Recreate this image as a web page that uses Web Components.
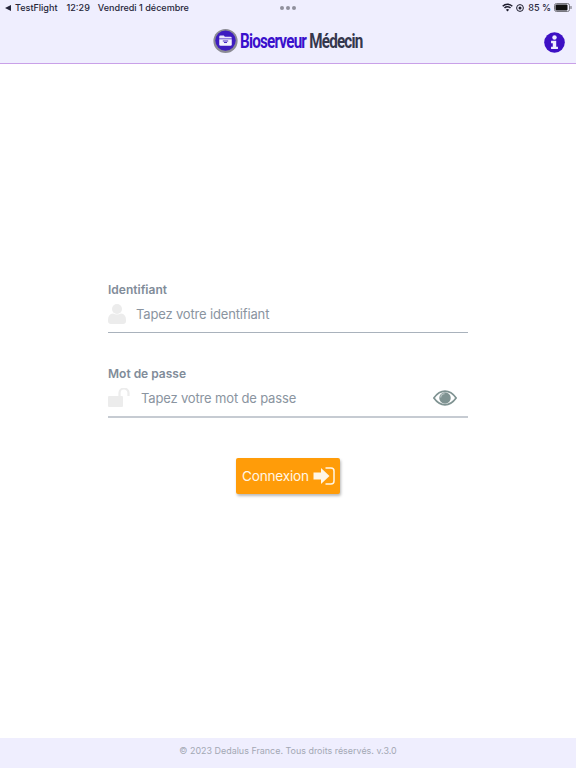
<!DOCTYPE html>
<html lang="fr">
<head>
<meta charset="utf-8">
<title>Bioserveur Médecin</title>
<style>
  html, body { margin: 0; height: 100%; background: #fff; }
  body { font-family: "Inter", "Liberation Sans", sans-serif; }
</style>
</head>
<body>
<login-page></login-page>

<script>
class StatusBar extends HTMLElement {
    constructor(){
        super();
        this.attachShadow({mode: 'open'}).innerHTML = `
        <style>
            :host {
                display: flex;
                align-items: center;
                justify-content: space-between;
                height: 15px;
                padding: 0 4px 0 5px;
                font: 500 9.05px "Inter", sans-serif;
                color: #26263a;
                position: relative;
            }
            .side { display: flex; align-items: center; }
            .back { width: 0; height: 0; border: 3px solid transparent; border-right: 6px solid #26263a; border-left: 0; margin-right: 4px; }
            .time { margin-left: 9px; }
            .date { margin-left: 8px; }
            .dots { position: absolute; left: 280px; top: 6px; display: flex; gap: 2px; }
            .dots i { width: 4px; height: 4px; border-radius: 50%; background: #8f8f9c; }
            svg { display: block; }
            .pct { margin: 0 3px 0 4px; }
        </style>
        <div class="side">
            <span class="back"></span><span>TestFlight</span>
            <span class="time">12:29</span><span class="date">Vendredi 1 décembre</span>
        </div>
        <div class="dots"><i></i><i></i><i></i></div>
        <div class="side">
            <svg width="11" height="9" viewBox="0 0 11 9" fill="none" stroke="#1c1c2c" stroke-width="1.5">
                <path d="M.7 3.2a6.8 6.8 0 0 1 9.6 0"/><path d="M2.5 5a4.2 4.2 0 0 1 6 0"/>
                <path d="M5.5 8.6 3.9 6.7a2.3 2.3 0 0 1 3.2 0z" fill="#1c1c2c" stroke="none"/>
            </svg>
            <svg style="margin-left:3px" width="8" height="8" viewBox="0 0 8 8" fill="none" stroke="#1c1c2c" stroke-width="1">
                <circle cx="4" cy="4" r="3.4"/><circle cx="4" cy="4" r="1.5" fill="#1c1c2c" stroke="none"/>
            </svg>
            <span class="pct">85 %</span>
            <svg width="18" height="9" viewBox="0 0 18 9">
                <rect x=".5" y=".5" width="15" height="8" rx="2" fill="none" stroke="#77777f"/>
                <rect x="1.5" y="1.5" width="12" height="6" rx="1" fill="#111"/>
                <rect x="16.4" y="3" width="1.2" height="3" rx=".6" fill="#77777f"/>
            </svg>
        </div>
        `;
    }
}

class AppHeader extends HTMLElement {
    constructor(){
        super();
        this.attachShadow({mode: 'open'}).innerHTML = `
        <style>
            :host {
                display: block;
                background: #efeefe;
                border-bottom: 1px solid #c9a0e8;
            }
            .bar {
                display: flex;
                align-items: center;
                justify-content: center;
                height: 48px;
                position: relative;
            }
            .brand { display: flex; align-items: center; gap: 2px; margin-top: 4px; }
            .name {
                display: block;
                width: 123px;
                white-space: nowrap;
                font: 700 19.5px "Roboto", sans-serif;
                letter-spacing: -1px;
                color: #3a10cc;
                transform: scaleX(.78);
                transform-origin: left center;
            }
            .name b { font-weight: 700; color: #35374d; }
            .info { position: absolute; right: 11px; top: 17px; display: block; }
        </style>
        <status-bar></status-bar>
        <div class="bar">
            <div class="brand">
                <svg width="25" height="26" viewBox="0 0 26 26">
                    <circle cx="13" cy="13" r="12.6" fill="#8b8b94"/>
                    <circle cx="13" cy="12.6" r="10.6" fill="#3d1cc0"/>
                    <path d="M6.500 10.500V8.600q0-1.200 1.200-1.200h3.600l1 1.200h5.900q1.300 0 1.300 1.200v.7z" fill="#e9e6fb"/>
                    <path d="M6.500 11.200h13v5.400q0 1.400-1.400 1.400H7.900q-1.400 0-1.400-1.400z" fill="#f4f3fe"/>
                    <path d="M10.200 13h5.600M11.400 14.600h3.200" stroke="#3d1cc0" stroke-width="1"/>
                </svg>
                <span class="name">Bioserveur <b>Médecin</b></span>
            </div>
            <svg class="info" width="21" height="21" viewBox="0 0 22 22">
                <circle cx="11" cy="11" r="10.8" fill="#3d10c4"/>
                <circle cx="11" cy="5.800" r="2.300" fill="#efeefe"/>
                <path d="M7.400 9.200h5.400v6.200h1.800v2.500H7.400v-2.500h1.800v-3.700H7.400z" fill="#efeefe"/>
            </svg>
        </div>
        `;
    }
}

class FormField extends HTMLElement {
    constructor(){
        super();
        this.attachShadow({mode: 'open'}).innerHTML = `
        <style>
            :host { display: block; }
            .label {
                font: 600 12px/16px "Inter", sans-serif;
                color: #818c99;
            }
            .row {
                display: flex;
                align-items: center;
                height: var(--row-height, 35px);
                padding-bottom: 2px;
                box-sizing: border-box;
                border-bottom: var(--line, 1px solid #a9b2bc);
            }
            .ph {
                flex: 1;
                font: 400 13px "Inter", sans-serif;
                letter-spacing: -.16px;
                color: #8a94a0;
            }
            ::slotted([slot="icon"]) { display: block; flex: none; }
            ::slotted([slot="end"]) { display: block; flex: none; }
        </style>
        <div class="label"></div>
        <div class="row">
            <slot name="icon"></slot>
            <span class="ph"></span>
            <slot name="end"></slot>
        </div>
        `;
    }
    connectedCallback(){
        this.shadowRoot.querySelector('.label').textContent = this.getAttribute('label');
        this.shadowRoot.querySelector('.ph').textContent = this.getAttribute('placeholder');
    }
}

class LoginButton extends HTMLElement {
    constructor(){
        super();
        this.attachShadow({mode: 'open'}).innerHTML = `
        <style>
            :host {
                display: flex;
                align-items: center;
                justify-content: space-between;
                box-sizing: border-box;
                width: 104px;
                height: 36px;
                padding: 0 5px 0 6px;
                background: #ff9c09;
                border-radius: 2px;
                box-shadow: 1px 2px 3px rgba(0,0,0,.28);
                color: #fff6e6;
                font: 400 13.6px "Inter", sans-serif;
                letter-spacing: -.2px;
            }
            svg { display: block; }
        </style>
        <slot></slot>
        <svg width="22" height="18" viewBox="0 0 22 18">
            <path d="M.5 5.500H8V1L16.500 9 8 17v-4.500H.5z" fill="#fff6e6"/>
            <path d="M12.500 1h5.500q3 0 3 3v10q0 3-3 3h-5.500" fill="none" stroke="#fff6e6" stroke-width="1.500"/>
        </svg>
        `;
    }
}

class AppFooter extends HTMLElement {
    constructor(){
        super();
        this.attachShadow({mode: 'open'}).innerHTML = `
        <style>
            :host {
                display: flex;
                align-items: center;
                justify-content: center;
                height: 30px;
                flex: none;
                padding-bottom: 5px;
                box-sizing: border-box;
                background: #efeefe;
                color: #a3a8b4;
                font: 400 8.95px "Inter", sans-serif;
            }
        </style>
        <slot></slot>
        `;
    }
}

class LoginPage extends HTMLElement {
    constructor(){
        super();
        this.attachShadow({mode: 'open'}).innerHTML = `
        <style>
            :host {
                display: flex;
                flex-direction: column;
                height: 768px;
                overflow: hidden;
            }
            main {
                flex: 1;
                padding: 218px 108px 0;
                display: flex;
                flex-direction: column;
            }
            form-field + form-field { margin-top: 33px; --row-height: 36px; --line: 2px solid #c6cbd2; }
            login-button { align-self: center; margin-top: 40px; }
        </style>
        <app-header></app-header>
        <main>
            <form-field label="Identifiant" placeholder="Tapez votre identifiant">
                <svg slot="icon" style="margin-right:10px" width="18" height="20" viewBox="0 0 18 20">
                    <circle cx="9" cy="5" r="5" fill="#ececec"/>
                    <path d="M0 16q0-6 5-6.500 4 2 8 0 5 .5 5 6.500v1q0 3-3 3H3q-3 0-3-3z" fill="#ececec"/>
                </svg>
            </form-field>
            <form-field label="Mot de passe" placeholder="Tapez votre mot de passe">
                <svg slot="icon" style="margin-right:10px" width="23" height="20" viewBox="0 0 23 20">
                    <rect x="0" y="8" width="15" height="11" rx="1" fill="#ececec"/>
                    <path d="M11.500 8V5a4.500 4.500 0 0 1 9 0v3" fill="none" stroke="#ececec" stroke-width="2.200"/>
                </svg>
                <svg slot="end" style="margin-right:11px" width="24" height="16" viewBox="0 0 25 16">
                    <path d="M.9 8Q6 .9 12.500 .9T24.100 8Q19 15.100 12.500 15.100T.9 8z" fill="none" stroke="#7f9392" stroke-width="1.800"/>
                    <circle cx="12.500" cy="8" r="6" fill="#7f9392"/>
                    <path d="M8 7.500a4.500 4.500 0 0 1 4-4" fill="none" stroke="#b7c4c3" stroke-width="1.200"/>
                </svg>
            </form-field>
            <login-button>Connexion</login-button>
        </main>
        <app-footer>© 2023 Dedalus France. Tous droits réservés. v.3.0</app-footer>
        `;
    }
}

customElements.define('status-bar', StatusBar);
customElements.define('app-header', AppHeader);
customElements.define('form-field', FormField);
customElements.define('login-button', LoginButton);
customElements.define('app-footer', AppFooter);
customElements.define('login-page', LoginPage);
</script>
</body>
</html>
